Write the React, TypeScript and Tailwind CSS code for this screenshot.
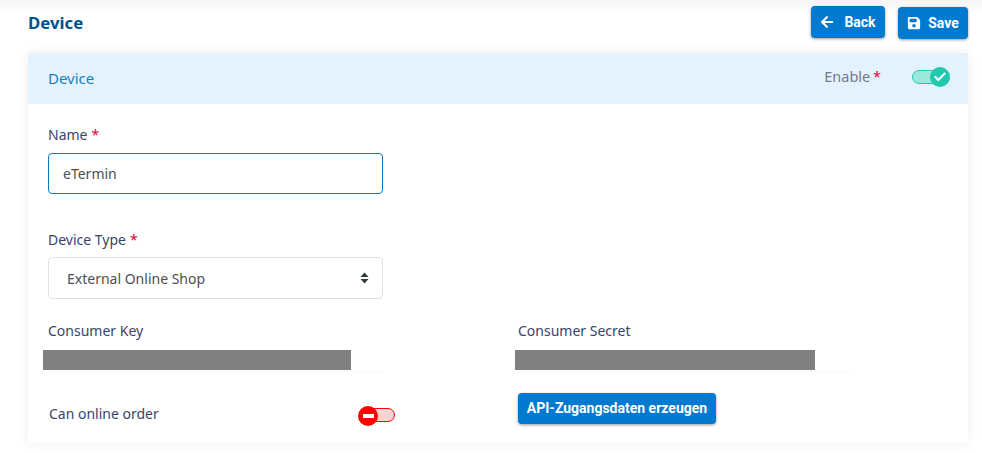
import { Check } from 'lucide-react'
import { FaArrowLeft, FaSave } from 'react-icons/fa'

const noto = { fontFamily: '"Noto Sans", sans-serif' }

function Label({ text, required }: { text: string; required?: boolean }) {
  return (
    <div className="text-[14px] leading-[20px] text-[#3a4468]">
      {text}
      {required && <span className="ml-1 text-[#e6003c]">*</span>}
    </div>
  )
}

function HiddenValue({ barWidth, barLeft }: { barWidth: string; barLeft: string }) {
  return (
    <div className="mt-[9px] border-b border-dotted border-[#eeeeee] pb-px">
      <div className={`h-5 bg-[#808080] ${barWidth} ${barLeft}`} />
    </div>
  )
}

export default function App() {
  return (
    <div
      className="h-[453px] w-[982px] overflow-hidden bg-gradient-to-b from-[#f4f5f7] to-white to-[14px] pl-[28px] pr-[14px]"
      style={noto}
    >
      {/* page header */}
      <div className="flex h-[53px] items-start justify-between">
        <h1 className="mt-[13px] text-[16.8px] font-bold leading-[20px] text-[#00528f]">Device</h1>
        <div className="flex items-start gap-[13px] pt-[6px]" style={{ fontFamily: 'Roboto, sans-serif' }}>
          <button className="flex h-[32px] w-[74px] items-center justify-center gap-[10px] rounded bg-[#0079d0] text-[14px] font-bold text-white shadow-[0_1px_3px_rgba(0,0,0,0.4)]">
            <FaArrowLeft size={14} />
            Back
          </button>
          <button className="mt-px flex h-[32px] w-[70px] items-center justify-center gap-[7px] rounded bg-[#0079d0] text-[14px] font-bold text-white shadow-[0_1px_3px_rgba(0,0,0,0.4)]">
            <FaSave size={14} />
            Save
          </button>
        </div>
      </div>

      {/* card */}
      <div className="h-[390px] w-[940px] overflow-hidden rounded-b bg-white shadow-[0_0_12px_rgba(0,0,0,0.07)]">
        <div className="flex h-[51px] items-center justify-between bg-[#e3f2fd] pl-5 pr-[18px]">
          <span className="-mt-px text-[15px] text-[#1a7fc4]">Device</span>
          <div className="-mt-[3px] flex items-center">
            <span className="-mt-px text-[14.5px] text-[#74788d]">
              Enable <span className="-ml-px text-[#e6003c]">*</span>
            </span>
            <div className="relative ml-[31px] h-[14px] w-[38px] rounded-full border border-[#20c9ae] bg-[#9be9dc]">
              <span className="absolute right-[-1px] top-[-4px] flex h-5 w-5 items-center justify-center rounded-full bg-[#20c9ae] text-white">
                <Check size={14} strokeWidth={3.5} />
              </span>
            </div>
          </div>
        </div>

        <div className="px-5 pt-[21px]">
          <Label text="Name" required />
          <div className="mt-[8px] flex h-[41px] w-[335px] items-center rounded border border-[#0a78c2] pl-[14px] text-[14px] text-[#495057]">
            eTermin
          </div>

          <div className="mt-[36px]">
            <Label text="Device Type" required />
          </div>
          <div className="mt-[7px] flex h-[42px] w-[335px] items-center justify-between rounded border border-[#dcdfe4] pl-[18px] pr-[13px] text-[14px] text-[#495057]">
            External Online Shop
            <svg width="9" height="12" viewBox="0 0 9 12" className="text-[#343a40]">
              <path d="M4.5 0.5 8.5 5H0.5Z M4.5 11.5 0.5 7H8.5Z" fill="currentColor" />
            </svg>
          </div>

          <div className="mt-[22px] grid grid-cols-[335px_334px] gap-x-[135px]">
            <div>
              <Label text="Consumer Key" />
              <HiddenValue barWidth="w-[308px]" barLeft="-ml-[5px]" />
            </div>
            <div>
              <Label text="Consumer Secret" />
              <HiddenValue barWidth="w-[300px]" barLeft="-ml-[3px]" />
            </div>
          </div>

          <div className="mt-[21px] grid grid-cols-[347px_335px] gap-x-[123px]">
            <div className="flex h-[32px] items-start justify-between pt-[11px]">
              <span className="pl-px text-[14px] leading-[20px] text-[#3a4468]">Can online order</span>
              <div className="relative mt-[4px] h-[14px] w-[28px] rounded-full border border-[#ff0000] bg-[#ffd2d6]">
                <span className="absolute left-[-10px] top-[-3px] flex h-5 w-5 items-center justify-center rounded-full bg-[#ff0000]">
                  <span className="h-[4px] w-[11px] bg-white" />
                </span>
              </div>
            </div>
            <button
              className="h-[31px] w-[198px] rounded bg-[#0079d0] text-[14px] font-bold text-white shadow-[0_1px_3px_rgba(0,0,0,0.4)]"
              style={{ fontFamily: 'Roboto, sans-serif' }}
            >
              API-Zugangsdaten erzeugen
            </button>
          </div>
        </div>
      </div>
    </div>
  )
}
